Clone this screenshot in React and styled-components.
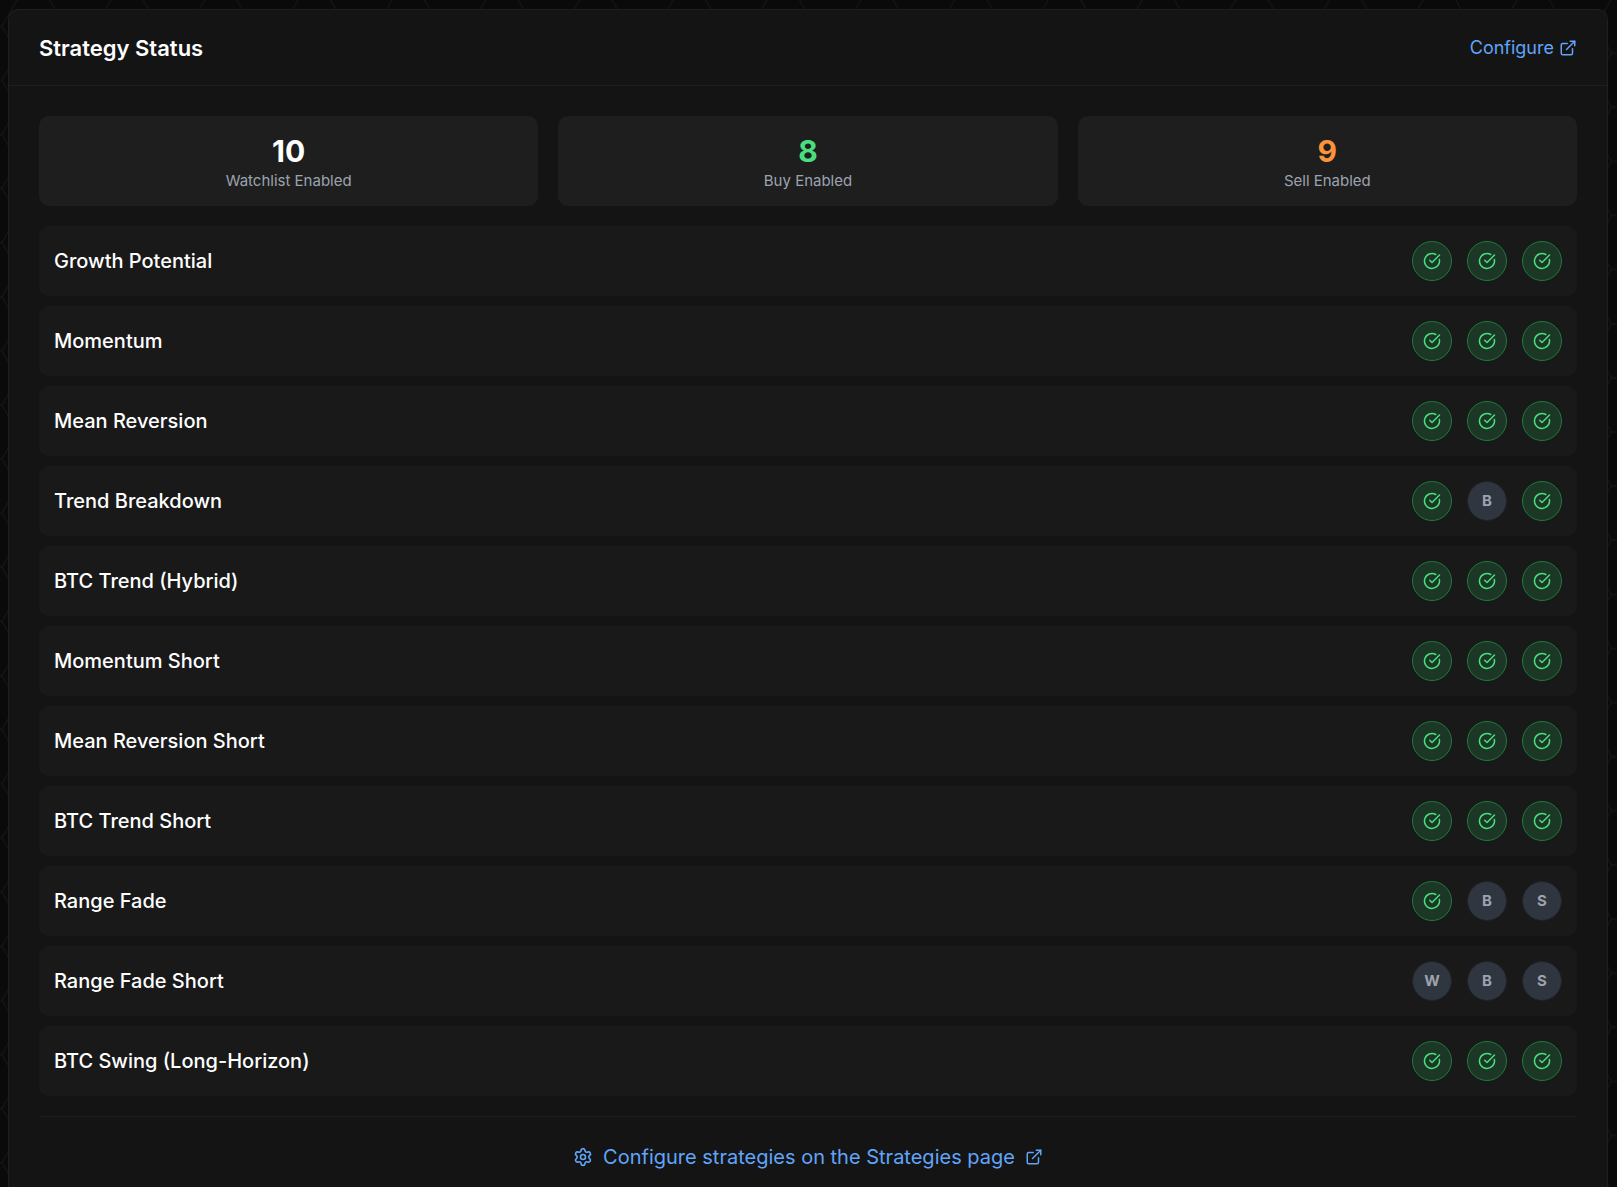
import styled, { createGlobalStyle } from "styled-components";
import { CircleCheckBig, ExternalLink, Settings } from "lucide-react";

const GlobalStyle = createGlobalStyle`
  * {
    box-sizing: border-box;
  }

  body {
    margin: 0;
    background: #0a0a0a;
    color: #ffffff;
    font-family: Inter, "Liberation Sans", sans-serif;
  }
`;

const Page = styled.div`
  position: relative;
  display: flex;
  flex-direction: column;
  min-height: 100vh;
  padding: 9px 9px 0 8px;
`;

const Backdrop = styled.svg`
  position: absolute;
  inset: 0;
  width: 100%;
  height: 100%;
`;

const Card = styled.section`
  position: relative;
  flex: 1;
  background: #141414;
  border: 1px solid #1f1f1f;
  border-bottom: 0;
  border-radius: 10px 10px 0 0;
`;

const CardHeader = styled.header`
  display: flex;
  align-items: center;
  justify-content: space-between;
  height: 76px;
  padding: 0 30px;
  border-bottom: 1px solid #1f1f1f;
`;

const CardTitle = styled.h2`
  margin: 0;
  font-size: 22px;
  font-weight: 600;
  line-height: 30px;
`;

const CardBody = styled.div`
  padding: 30px 30px 0;
`;

const TextLink = styled.a`
  display: inline-flex;
  align-items: center;
  gap: ${({ $large }) => ($large ? "10px" : "5px")};
  color: #60a5fa;
  font-size: ${({ $large }) => ($large ? "20px" : "18px")};
  line-height: ${({ $large }) => ($large ? "30px" : "25px")};
  text-decoration: none;

  &:hover {
    color: #93c5fd;
  }
`;

const StatGrid = styled.div`
  display: grid;
  grid-template-columns: repeat(3, 1fr);
  gap: 20px;
  margin-bottom: 20px;
`;

const Stat = styled.div`
  padding: 15px;
  background: #1e1e1e;
  border-radius: 10px;
  text-align: center;
`;

const StatValue = styled.div`
  color: ${({ $color }) => $color};
  font-size: 30px;
  font-weight: 700;
  line-height: 40px;
`;

const StatLabel = styled.div`
  color: #9ca3af;
  font-size: 15px;
  line-height: 20px;
`;

const StrategyList = styled.ul`
  display: flex;
  flex-direction: column;
  gap: 10px;
  margin: 0;
  padding: 0;
  list-style: none;
`;

const StrategyRow = styled.li`
  display: flex;
  align-items: center;
  justify-content: space-between;
  padding: 15px;
  background: #191919;
  border-radius: 10px;
`;

const StrategyName = styled.span`
  font-size: 20px;
  font-weight: 500;
  line-height: 30px;
`;

const BadgeGroup = styled.div`
  display: flex;
  gap: 15px;
`;

const Badge = styled.span`
  display: flex;
  align-items: center;
  justify-content: center;
  width: 40px;
  height: 40px;
  border: 1px solid ${({ $on }) => ($on ? "#1f7a3e" : "#1f2226")};
  border-radius: 50%;
  background: ${({ $on }) => ($on ? "#1d3726" : "#2f3640")};
  color: ${({ $on }) => ($on ? "#4ade80" : "#9ca3af")};
  font-size: 15px;
  font-weight: 700;
  line-height: 20px;
`;

const CardFooter = styled.footer`
  display: flex;
  justify-content: center;
  margin-top: 20px;
  padding: 25px 0 10px;
  border-top: 1px solid #1f1f1f;
`;

const stats = [
  { label: "Watchlist Enabled", value: 10, color: "#ffffff" },
  { label: "Buy Enabled", value: 8, color: "#4ade80" },
  { label: "Sell Enabled", value: 9, color: "#fb923c" },
];

const modes = ["W", "B", "S"];

// enabled lists the modes that are switched on
const strategies = [
  { name: "Growth Potential", enabled: "WBS" },
  { name: "Momentum", enabled: "WBS" },
  { name: "Mean Reversion", enabled: "WBS" },
  { name: "Trend Breakdown", enabled: "WS" },
  { name: "BTC Trend (Hybrid)", enabled: "WBS" },
  { name: "Momentum Short", enabled: "WBS" },
  { name: "Mean Reversion Short", enabled: "WBS" },
  { name: "BTC Trend Short", enabled: "WBS" },
  { name: "Range Fade", enabled: "W" },
  { name: "Range Fade Short", enabled: "" },
  { name: "BTC Swing (Long-Horizon)", enabled: "WBS" },
];

const HexBackdrop = () => (
  <Backdrop aria-hidden="true">
    <defs>
      <pattern
        id="hex"
        width="75"
        height="43.3"
        patternUnits="userSpaceOnUse"
        patternTransform="translate(2 -1) scale(1.25)"
      >
        <path
          d="M0 21.65 12.5 0h25L50 21.65 37.5 43.3h-25zM50 21.65h25"
          fill="none"
          stroke="#151515"
          strokeWidth="1"
        />
      </pattern>
    </defs>
    <rect width="100%" height="100%" fill="url(#hex)" />
  </Backdrop>
);

export default function App() {
  return (
    <>
      <GlobalStyle />
      <Page>
        <HexBackdrop />
        <Card>
          <CardHeader>
            <CardTitle>Strategy Status</CardTitle>
            <TextLink href="#strategies">
              Configure
              <ExternalLink size={18} />
            </TextLink>
          </CardHeader>
          <CardBody>
            <StatGrid>
              {stats.map(({ label, value, color }) => (
                <Stat key={label}>
                  <StatValue $color={color}>{value}</StatValue>
                  <StatLabel>{label}</StatLabel>
                </Stat>
              ))}
            </StatGrid>
            <StrategyList>
              {strategies.map(({ name, enabled }) => (
                <StrategyRow key={name}>
                  <StrategyName>{name}</StrategyName>
                  <BadgeGroup>
                    {modes.map((mode) => {
                      const on = enabled.includes(mode);
                      return (
                        <Badge key={mode} $on={on}>
                          {on ? <CircleCheckBig size={18} /> : mode}
                        </Badge>
                      );
                    })}
                  </BadgeGroup>
                </StrategyRow>
              ))}
            </StrategyList>
            <CardFooter>
              <TextLink href="#strategies" $large>
                <Settings size={20} />
                Configure strategies on the Strategies page
                <ExternalLink size={18} />
              </TextLink>
            </CardFooter>
          </CardBody>
        </Card>
      </Page>
    </>
  );
}
